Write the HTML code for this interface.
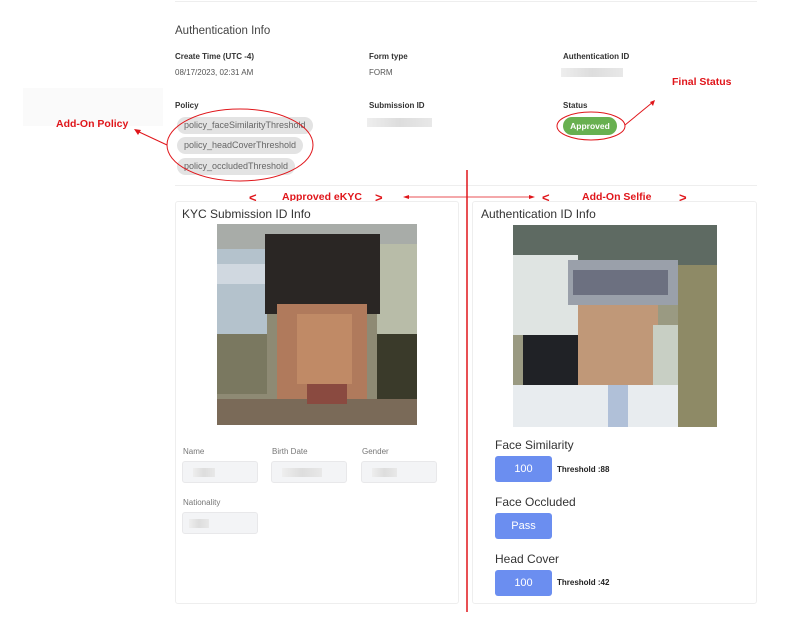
<!DOCTYPE html>
<html><head><meta charset="utf-8"><style>
*{margin:0;padding:0;box-sizing:border-box}
body{width:798px;height:631px;background:#fff;font-family:"Liberation Sans",sans-serif;position:relative;overflow:hidden;color:#333}
.a{position:absolute;white-space:nowrap}
.lbl{font-size:8px;font-weight:bold;color:#333}
.val{font-size:8px;color:#555}
.blur{position:absolute;height:9px;background:linear-gradient(90deg,#eee,#ddd,#e8e8e8);}
.pill{position:absolute;height:17px;border-radius:9px;background:#e3e3e3;color:#666;font-size:9px;line-height:17px;padding:0 7px}
.red{color:#e0161b;font-weight:bold;font-size:10.5px}
.card{position:absolute;border:1px solid #eee;border-radius:3px;background:#fff}
.fl{font-size:8px;color:#777}
.box{position:absolute;width:76px;height:22px;background:#f3f4f6;border:1px solid #e8e8ea;border-radius:3px}
.btn{position:absolute;width:57px;height:26px;background:#6b8ef0;border-radius:3px;color:#fff;font-size:11px;text-align:center;line-height:26px}
.h{font-size:12px;color:#333}
.th{font-size:8px;font-weight:bold;color:#222}
</style></head><body>
<div class="a" style="left:175px;top:1px;width:582px;height:1px;background:#eee"></div>
<div class="a" style="left:23px;top:88px;width:140px;height:38px;background:#fafafa"></div>
<div class="a" style="left:175px;top:25px;font-size:11.5px;color:#444">Authentication Info</div>
<div class="a lbl" style="left:175px;top:52px">Create Time (UTC -4)</div>
<div class="a val" style="left:175px;top:68px">08/17/2023, 02:31 AM</div>
<div class="a lbl" style="left:369px;top:52px">Form type</div>
<div class="a val" style="left:369px;top:68px">FORM</div>
<div class="a lbl" style="left:563px;top:52px">Authentication ID</div>
<div class="blur" style="left:561px;top:68px;width:62px"></div>
<div class="a lbl" style="left:175px;top:101px">Policy</div>
<div class="a lbl" style="left:369px;top:101px">Submission ID</div>
<div class="blur" style="left:367px;top:118px;width:65px"></div>
<div class="a lbl" style="left:563px;top:101px">Status</div>
<div class="pill" style="left:177px;top:117px">policy_faceSimilarityThreshold</div>
<div class="pill" style="left:177px;top:137px">policy_headCoverThreshold</div>
<div class="pill" style="left:177px;top:158px">policy_occludedThreshold</div>
<div class="a" style="left:563px;top:117px;width:54px;height:18px;border-radius:9px;background:#68b050;color:#fff;font-size:8.5px;font-weight:bold;line-height:18px;text-align:center">Approved</div>
<div class="a" style="left:175px;top:185px;width:582px;height:1px;background:#eee"></div>
<div class="a red" style="left:56px;top:118px">Add-On Policy</div>
<div class="a red" style="left:672px;top:76px">Final Status</div>
<div class="a red" style="left:249px;top:190px;font-size:13px">&lt;</div>
<div class="a red" style="left:282px;top:191px">Approved eKYC</div>
<div class="a red" style="left:375px;top:190px;font-size:13px">&gt;</div>
<div class="a red" style="left:542px;top:190px;font-size:13px">&lt;</div>
<div class="a red" style="left:582px;top:191px">Add-On Selfie</div>
<div class="a red" style="left:679px;top:190px;font-size:13px">&gt;</div>
<svg class="a" style="left:0;top:0" width="798" height="631">
<g fill="none" stroke="#e0161b" stroke-width="1">
<ellipse cx="240" cy="145" rx="73" ry="36"/>
<ellipse cx="591" cy="126" rx="34" ry="14"/>
<line x1="167" y1="145" x2="137" y2="131"/>
<line x1="625" y1="125" x2="653" y2="102"/>
<line x1="467" y1="170" x2="467" y2="612" stroke-width="1.5"/>
<line x1="405" y1="197" x2="532" y2="197" stroke-width="0.7"/>
</g>
<g fill="#e0161b"><polygon points="134,129 141,130 138,135"/><polygon points="655,100 650,102 653,106"/><polygon points="403,197 409,195 409,199"/><polygon points="535,197 529,195 529,199"/></g>
</svg>
<div class="card" style="left:175px;top:201px;width:284px;height:403px"></div>
<div class="card" style="left:472px;top:201px;width:285px;height:403px"></div>
<div class="a h" style="left:182px;top:207px">KYC Submission ID Info</div>
<div class="a h" style="left:481px;top:207px">Authentication ID Info</div>
<svg class="a" style="left:217px;top:224px" width="200" height="201">
<rect width="200" height="201" fill="#8e8a74"/>
<rect x="0" y="0" width="200" height="30" fill="#a8aca8"/>
<rect x="0" y="25" width="50" height="90" fill="#b4c2cc"/>
<rect x="160" y="20" width="40" height="90" fill="#b8bca8"/>
<rect x="160" y="110" width="40" height="70" fill="#3a3a2a"/>
<rect x="0" y="110" width="50" height="60" fill="#7a7860"/>
<rect x="0" y="40" width="50" height="20" fill="#d0d8e0"/>
<rect x="48" y="10" width="115" height="80" fill="#2a2624"/>
<rect x="60" y="80" width="90" height="105" fill="#b07a5c"/>
<rect x="80" y="90" width="55" height="70" fill="#c08a66"/>
<rect x="0" y="175" width="200" height="26" fill="#7a6a58"/>
<rect x="90" y="160" width="40" height="20" fill="#8a4a40"/>
</svg>
<svg class="a" style="left:513px;top:225px" width="204" height="202">
<rect width="204" height="202" fill="#9a9a82"/>
<rect x="0" y="0" width="204" height="40" fill="#5e6a62"/>
<rect x="0" y="30" width="65" height="80" fill="#dfe4e2"/>
<rect x="165" y="40" width="39" height="162" fill="#8e8a66"/>
<rect x="55" y="35" width="110" height="45" fill="#9aa0aa"/>
<rect x="60" y="45" width="95" height="25" fill="#6c7080"/>
<rect x="10" y="110" width="55" height="55" fill="#202226"/>
<rect x="65" y="80" width="80" height="90" fill="#c09878"/>
<rect x="140" y="100" width="25" height="90" fill="#c8cfc4"/>
<rect x="0" y="160" width="165" height="42" fill="#e8ecef"/>
<rect x="95" y="160" width="20" height="42" fill="#b0c0d8"/>
</svg>
<div class="a fl" style="left:183px;top:447px">Name</div>
<div class="a fl" style="left:272px;top:447px">Birth Date</div>
<div class="a fl" style="left:362px;top:447px">Gender</div>
<div class="box" style="left:182px;top:461px"><div class="blur" style="left:10px;top:6px;width:22px;height:9px"></div></div>
<div class="box" style="left:271px;top:461px"><div class="blur" style="left:10px;top:6px;width:40px;height:9px"></div></div>
<div class="box" style="left:361px;top:461px"><div class="blur" style="left:10px;top:6px;width:25px;height:9px"></div></div>
<div class="a fl" style="left:183px;top:498px">Nationality</div>
<div class="box" style="left:182px;top:512px"><div class="blur" style="left:6px;top:6px;width:20px;height:9px"></div></div>
<div class="a h" style="left:495px;top:438px">Face Similarity</div>
<div class="btn" style="left:495px;top:456px">100</div>
<div class="a th" style="left:557px;top:465px">Threshold :88</div>
<div class="a h" style="left:495px;top:495px">Face Occluded</div>
<div class="btn" style="left:495px;top:513px">Pass</div>
<div class="a h" style="left:495px;top:552px">Head Cover</div>
<div class="btn" style="left:495px;top:570px">100</div>
<div class="a th" style="left:557px;top:578px">Threshold :42</div>
</body></html>
